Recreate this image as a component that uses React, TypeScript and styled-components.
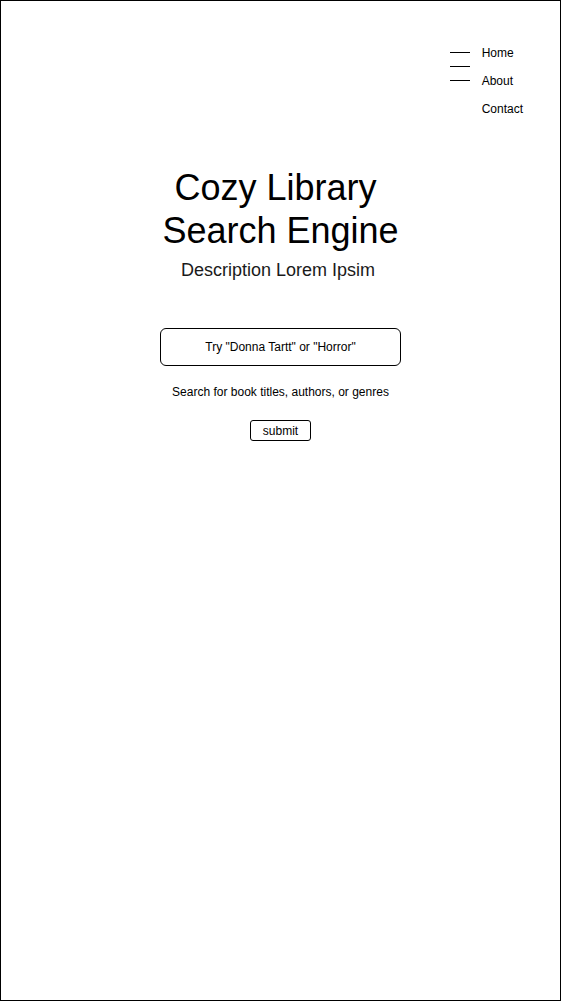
import React from "react";
import styled, { createGlobalStyle } from "styled-components";

const Global = createGlobalStyle`
  html, body { margin: 0; padding: 0; background: #fff; }
  body { font-family: "Liberation Sans", Arial, sans-serif; color: #000; }
  * { box-sizing: border-box; }
`;

const Page = styled.div`
  width: 561px;
  height: 1001px;
  border: 1px solid #000;
  display: flex;
  flex-direction: column;
  align-items: center;
`;

const Header = styled.header`
  align-self: stretch;
  display: flex;
  justify-content: flex-end;
  padding: 38px 37px 0 0;
`;

const Nav = styled.nav`
  display: flex;
  gap: 12px;
`;

const Burger = styled.svg`
  display: block;
  margin-top: 13px;
`;

const NavList = styled.ul`
  list-style: none;
  margin: 0;
  padding: 0;
`;

const NavItem = styled.li`
  font-size: 12px;
  line-height: 28px;
  color: #000;
`;

const Title = styled.h1`
  margin: 43px 0 0;
  font-weight: 400;
  font-size: 36px;
  line-height: 43px;
  text-align: center;
  white-space: pre;
`;

const Description = styled.p`
  margin: 7px 0 0;
  font-size: 18px;
  line-height: 22px;
  color: #1a1a1a;
  text-align: center;
  white-space: pre;
`;

const SearchBox = styled.div`
  margin-top: 47px;
  width: 241px;
  height: 38px;
  border: 1px solid #000;
  border-radius: 6px;
  display: flex;
  align-items: center;
  justify-content: center;
  font-size: 12px;
`;

const Helper = styled.p`
  margin: 19px 0 0;
  font-size: 12px;
  line-height: 14px;
  text-align: center;
`;

const SubmitButton = styled.button`
  margin-top: 21px;
  width: 61px;
  height: 21px;
  border: 1px solid #000;
  border-radius: 3px;
  background: #fff;
  font-family: "Liberation Sans", Arial, sans-serif;
  font-size: 12px;
  color: #000;
  padding: 0;
`;

export default function App() {
  return (
    <>
      <Global />
      <Page>
        <Header>
          <Nav>
            <Burger width="20" height="30" viewBox="0 0 20 30">
              <line x1="0" y1="0.5" x2="20" y2="0.5" stroke="#000" strokeWidth="1" />
              <line x1="0" y1="14.5" x2="20" y2="14.5" stroke="#000" strokeWidth="1" />
              <line x1="0" y1="28.5" x2="20" y2="28.5" stroke="#000" strokeWidth="1" />
            </Burger>
            <NavList>
              <NavItem>Home</NavItem>
              <NavItem>About</NavItem>
              <NavItem>Contact</NavItem>
            </NavList>
          </Nav>
        </Header>
        <Title>{"Cozy Library \nSearch Engine"}</Title>
        <Description>{"Description Lorem Ipsim "}</Description>
        <SearchBox>Try "Donna Tartt" or "Horror"</SearchBox>
        <Helper>Search for book titles, authors, or genres</Helper>
        <SubmitButton>submit</SubmitButton>
      </Page>
    </>
  );
}
